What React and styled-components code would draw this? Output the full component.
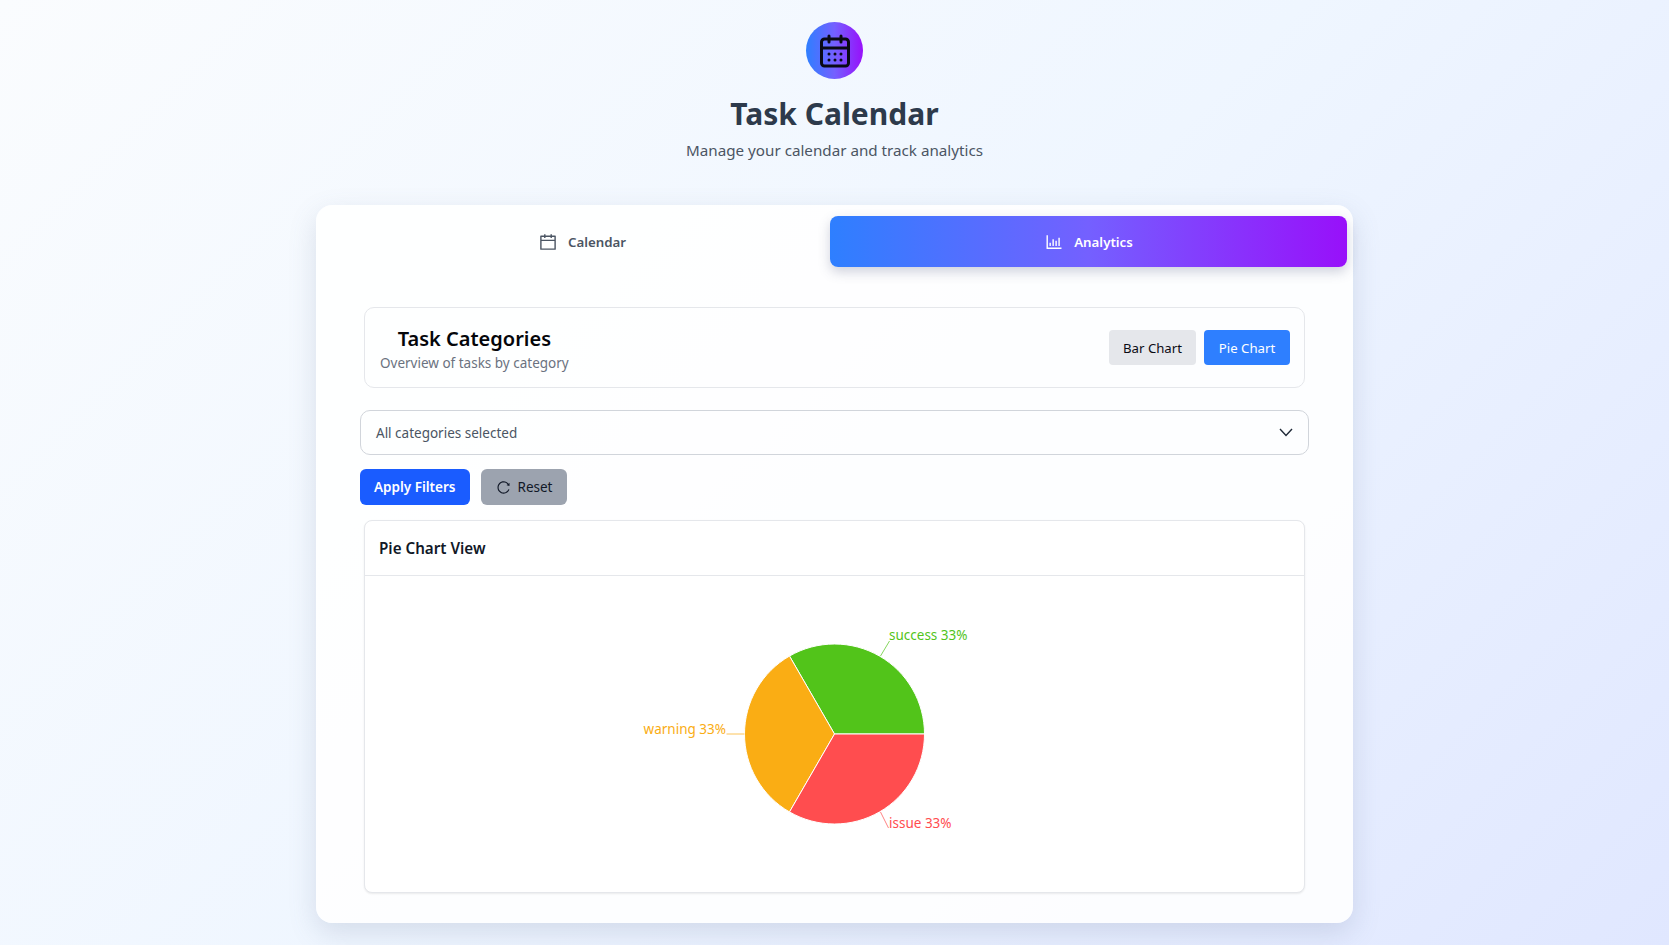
import React from 'react';
import styled, { createGlobalStyle } from 'styled-components';
import { CalendarDays } from 'lucide-react';
import { AiOutlineCalendar, AiOutlineBarChart, AiOutlineReload } from 'react-icons/ai';

const brandGradient = 'linear-gradient(90deg, #2e7fff 0%, #7460ff 50%, #9810fa 100%)';

const GlobalStyle = createGlobalStyle`
  html, body {
    margin: 0;
    padding: 0;
  }
  body {
    font-family: "Noto Sans", "Open Sans", sans-serif;
  }
  * {
    box-sizing: border-box;
  }
`;

const Page = styled.div`
  min-height: 945px;
  padding: 22px 316px;
  background: linear-gradient(135deg, #fafcfe 0%, #eff6ff 50%, #e0e7ff 100%);
`;

const Header = styled.header`
  display: flex;
  flex-direction: column;
  align-items: center;
  margin-bottom: 43px;
`;

const LogoCircle = styled.div`
  width: 57px;
  height: 57px;
  border-radius: 50%;
  display: flex;
  align-items: center;
  justify-content: center;
  background: ${brandGradient};
  color: #0a0a14;
  margin-bottom: 15px;
`;

const Title = styled.h1`
  margin: 0;
  font-size: 30px;
  line-height: 40px;
  font-weight: 700;
  color: #2d3a4b;
`;

const Subtitle = styled.p`
  margin: 4px 0 0;
  font-size: 15.2px;
  line-height: 24px;
  color: #4b5563;
`;

const Card = styled.main`
  height: 718px;
  border-radius: 16px;
  background: rgba(255, 255, 255, 0.88);
  box-shadow: 0 10px 28px rgba(90, 105, 140, 0.18);
  padding: 11px 6px 30px;
`;

const Tabs = styled.nav`
  display: grid;
  grid-template-columns: 508px 517px;
  margin-bottom: 40px;
`;

const Tab = styled.button`
  height: 51px;
  border: 0;
  border-radius: 8px;
  display: flex;
  align-items: center;
  justify-content: center;
  gap: 10px;
  font-family: inherit;
  font-size: 13.3px;
  font-weight: 600;
  padding: ${(p) => (p.$active ? '0' : '0 0 0 12px')};
  color: ${(p) => (p.$active ? '#ffffff' : '#4b5563')};
  background: ${(p) => (p.$active ? brandGradient : 'transparent')};
  box-shadow: ${(p) => (p.$active ? '0 5px 12px rgba(70, 80, 120, 0.25)' : 'none')};
`;

const Content = styled.section`
  padding: 0 38px;
`;

const Panel = styled.div`
  height: 81px;
  margin: 0 4px 22px;
  padding: 0 14px 0 15px;
  border: 1px solid #e5e7eb;
  border-radius: 10px;
  display: flex;
  align-items: center;
  justify-content: space-between;
`;

const PanelText = styled.div`
  text-align: center;
`;

const PanelTitle = styled.h2`
  margin: 0;
  font-size: 20px;
  line-height: 30px;
  font-weight: 600;
  color: #05060a;
`;

const PanelSub = styled.p`
  margin: 0;
  font-size: 13.5px;
  line-height: 18px;
  color: #6b7280;
`;

const ToggleGroup = styled.div`
  display: flex;
  gap: 8px;
`;

const ToggleButton = styled.button`
  height: 35px;
  width: ${(p) => (p.$active ? '86px' : '87px')};
  border: 0;
  border-radius: 4px;
  font-family: inherit;
  font-size: 13.2px;
  color: ${(p) => (p.$active ? '#ffffff' : '#0a0a14')};
  background: ${(p) => (p.$active ? '#2e7fff' : '#e5e7eb')};
`;

const SelectBox = styled.div`
  height: 45px;
  padding: 0 14px 0 15px;
  border: 1px solid #d1d5db;
  border-radius: 10px;
  display: flex;
  align-items: center;
  justify-content: space-between;
  font-size: 13.5px;
  color: #4b5563;
  margin-bottom: 14px;
`;

const Actions = styled.div`
  display: flex;
  gap: 11px;
  margin-bottom: 15px;
`;

const ActionButton = styled.button`
  height: 36px;
  padding: 0 ${(p) => (p.$primary ? '14px' : '15px')};
  border: 0;
  border-radius: 6px;
  display: flex;
  align-items: center;
  gap: 7px;
  font-family: inherit;
  font-size: 13.5px;
  font-weight: ${(p) => (p.$primary ? 600 : 400)};
  color: ${(p) => (p.$primary ? '#ffffff' : '#111827')};
  background: ${(p) => (p.$primary ? '#1a5cff' : '#9ca3af')};
`;

const ChartCard = styled.div`
  margin: 0 4px;
  height: 373px;
  background: #ffffff;
  border: 1px solid #e5e7eb;
  border-radius: 8px;
  box-shadow: 0 1px 2px rgba(0, 0, 0, 0.08);
`;

const ChartHeader = styled.div`
  height: 55px;
  padding: 0 14px;
  display: flex;
  align-items: center;
  border-bottom: 1px solid #e5e7eb;
  font-size: 15.2px;
  font-weight: 600;
  color: #111827;
`;

const ChartBody = styled.div`
  display: flex;
  justify-content: center;
`;

const cx = 249.5;
const cy = 158;
const r = 90;

const slices = [
  { name: 'success', color: '#52c41a', from: 0, to: 120, line: 'M 295.5 80 L 304.5 65', x: 304, y: 64, anchor: 'start' },
  { name: 'warning', color: '#faad14', from: 120, to: 240, line: 'M 159.5 158 L 141.5 158', x: 141, y: 158, anchor: 'end' },
  { name: 'issue', color: '#ff4d4f', from: 240, to: 360, line: 'M 295.5 236 L 303.5 252', x: 304, y: 252, anchor: 'start' },
];

// angles run counter-clockwise from 3 o'clock
const point = (deg) => {
  const a = (deg * Math.PI) / 180;
  return `${cx + r * Math.cos(a)} ${cy - r * Math.sin(a)}`;
};

const PieChart = () => (
  <svg width='500' height='317' viewBox='0 0 500 317'>
    {slices.map((s) => (
      <g key={s.name}>
        <path
          d={`M ${cx} ${cy} L ${point(s.from)} A ${r} ${r} 0 0 0 ${point(s.to)} Z`}
          fill={s.color}
          stroke='#ffffff'
          strokeWidth='1'
        />
        <path d={s.line} fill='none' stroke={s.color} strokeOpacity='0.7' strokeWidth='1' />
        <text x={s.x} y={s.y} textAnchor={s.anchor} fontSize='13.5' fill={s.color} fontFamily='"Noto Sans", sans-serif'>
          {s.name} 33%
        </text>
      </g>
    ))}
  </svg>
);

const App = () => {
  return (
    <Page>
      <GlobalStyle />
      <Header>
        <LogoCircle>
          <CalendarDays size={36} strokeWidth={2} />
        </LogoCircle>
        <Title>Task Calendar</Title>
        <Subtitle>Manage your calendar and track analytics</Subtitle>
      </Header>
      <Card>
        <Tabs>
          <Tab>
            <AiOutlineCalendar size={20} />
            Calendar
          </Tab>
          <Tab $active>
            <AiOutlineBarChart size={20} />
            Analytics
          </Tab>
        </Tabs>
        <Content>
          <Panel>
            <PanelText>
              <PanelTitle>Task Categories</PanelTitle>
              <PanelSub>Overview of tasks by category</PanelSub>
            </PanelText>
            <ToggleGroup>
              <ToggleButton>Bar Chart</ToggleButton>
              <ToggleButton $active>Pie Chart</ToggleButton>
            </ToggleGroup>
          </Panel>
          <SelectBox>
            All categories selected
            <svg width='16' height='16' viewBox='0 0 16 16'>
              <path d='M2 4 L8 10.5 L14 4' fill='none' stroke='#1f2937' strokeWidth='1.4' />
            </svg>
          </SelectBox>
          <Actions>
            <ActionButton $primary>Apply Filters</ActionButton>
            <ActionButton>
              <AiOutlineReload size={15} />
              Reset
            </ActionButton>
          </Actions>
          <ChartCard>
            <ChartHeader>Pie Chart View</ChartHeader>
            <ChartBody>
              <PieChart />
            </ChartBody>
          </ChartCard>
        </Content>
      </Card>
    </Page>
  );
};

export default App;
